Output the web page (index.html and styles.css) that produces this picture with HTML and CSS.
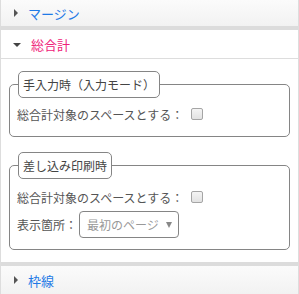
FILE: index.html
```html
<!DOCTYPE html>
<html lang="ja">
<head>
<meta charset="UTF-8">
<meta name="viewport" content="width=device-width, initial-scale=1.0">
<title>総合計</title>
<link rel="stylesheet" href="styles.css">
</head>
<body>

<div class="panel">
    <div class="sec-head closed">
        <span class="arrow-right"></span>
        <span class="sec-title">マージン</span>
    </div>

    <div class="sec-head open">
        <span class="arrow-down"></span>
        <span class="sec-title active">総合計</span>
    </div>
    <div class="sec-body">
        <fieldset class="group">
            <legend>手入力時（入力モード）</legend>
            <label class="row">
                総合計対象のスペースとする：
                <input type="checkbox" class="check">
            </label>
        </fieldset>

        <fieldset class="group second">
            <legend>差し込み印刷時</legend>
            <label class="row">
                総合計対象のスペースとする：
                <input type="checkbox" class="check">
            </label>
            <div class="row select-row">
                表示箇所：
                <span class="select-wrap">
                    <select class="select">
                        <option>最初のページ</option>
                        <option>すべてのページ</option>
                        <option>最後のページ</option>
                    </select>
                </span>
            </div>
        </fieldset>
    </div>

    <div class="sec-head closed">
        <span class="arrow-right"></span>
        <span class="sec-title">枠線</span>
    </div>
</div>

</body>
</html>
```

FILE: styles.css
```css
body {
    font-family: "Noto Sans CJK JP", "Noto Sans", sans-serif;
    margin: 0;
    padding: 0;
    background-color: #fff;
}
.panel {
    width: 297px;
    border-left: 1px solid #ddd;
    border-right: 1px solid #ddd;
}
.sec-head {
    display: flex;
    align-items: center;
    height: 26px;
    padding-left: 12px;
    box-sizing: border-box;
    background: linear-gradient(#fbfbfb, #f2f2f2);
}
.sec-head.open {
    border-top: 4px solid #dcdcdc;
    border-bottom: 1px solid #ddd;
    background: #fff;
    height: 33px;
}
.sec-body + .sec-head {
    border-top: 4px solid #dcdcdc;
    border-bottom: 1px solid #ddd;
    height: 33px;
}
.sec-title {
    font-size: 13px;
    color: #1f7ae6;
    margin-left: 10px;
    line-height: 1;
}
.sec-title.active {
    color: #ef2179;
}
.arrow-right {
    width: 0;
    height: 0;
    margin-left: 1px;
    border-top: 4px solid transparent;
    border-bottom: 4px solid transparent;
    border-left: 4px solid #555;
}
.arrow-down {
    width: 0;
    height: 0;
    margin-top: 1px;
    border-left: 4px solid transparent;
    border-right: 4px solid transparent;
    border-top: 4px solid #444;
}
.sec-body {
    padding: 12px 8px 12px 8px;
}
.group {
    margin: 0;
    padding: 4px 8px 10px 7px;
    border: 1px solid #858585;
    border-radius: 5px;
    font-size: 12px;
    color: #555;
}
.group.second {
    margin-top: 15px;
    padding-top: 6px;
    padding-bottom: 11px;
}
.group legend {
    margin-left: 1px;
    padding: 0 4px;
    line-height: 25px;
    border: 1px solid #858585;
    border-radius: 5px;
    color: #444;
    background-color: #fff;
}
.row {
    display: flex;
    align-items: center;
    height: 24px;
}
.check {
    appearance: none;
    width: 12px;
    height: 12px;
    margin: 0 0 0 8px;
    border: 1px solid #a5a5a5;
    border-radius: 2px;
    background: linear-gradient(#f4f4f4, #e2e2e2);
    cursor: pointer;
}
.select-row {
    height: 27px;
    margin-top: 2px;
}
.select-wrap {
    position: relative;
    display: flex;
    margin-left: 2px;
}
.select {
    appearance: none;
    width: 100px;
    height: 27px;
    padding: 0 0 0 7px;
    border: 1px solid #858585;
    border-radius: 4px;
    background-color: #fff;
    font-family: inherit;
    font-size: 12px;
    color: #999;
}
.select-wrap::after {
    content: "";
    position: absolute;
    right: 7px;
    top: 11px;
    border-left: 3px solid transparent;
    border-right: 3px solid transparent;
    border-top: 6px solid #888;
    pointer-events: none;
}
```
